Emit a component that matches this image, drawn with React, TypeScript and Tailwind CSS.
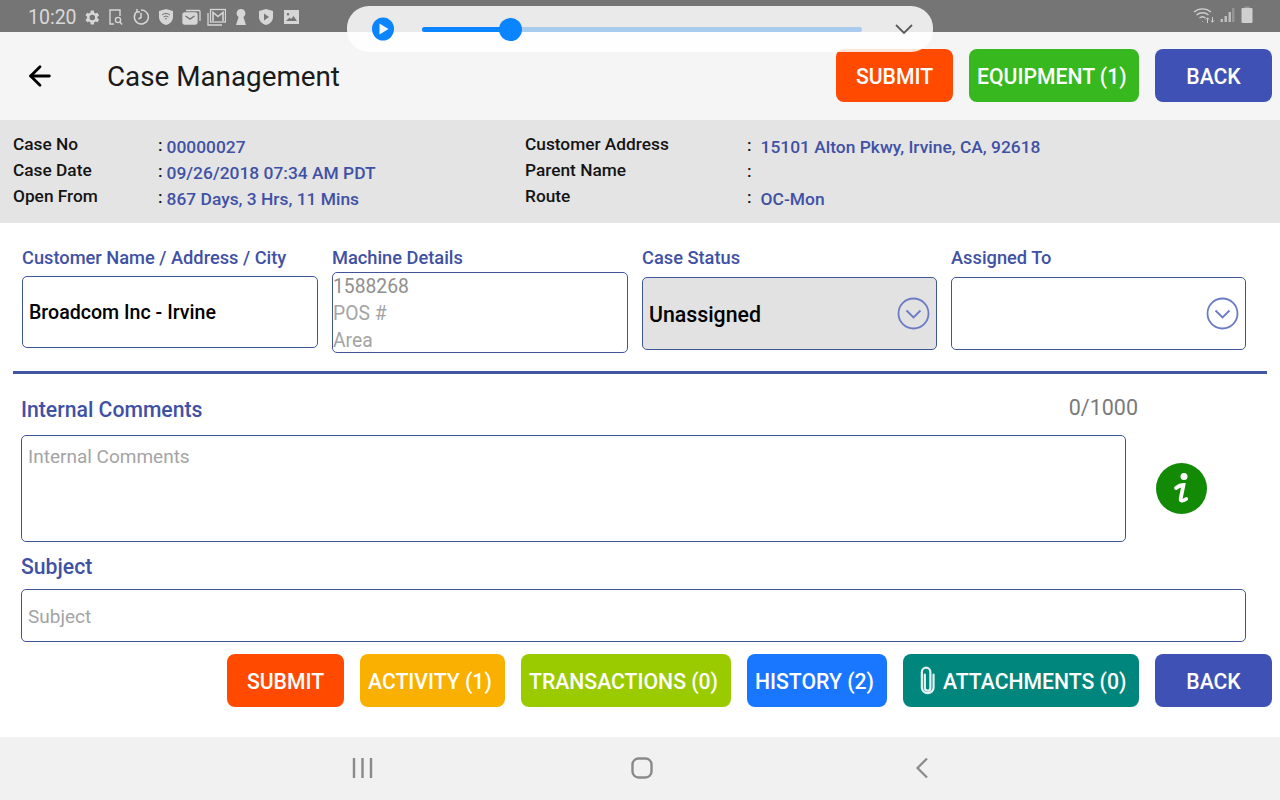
import React from "react";
import { ArrowLeft } from "lucide-react";

const labelCls = "text-[18.25px] font-medium leading-5 text-[#3f51a5]";
const btnCls = "flex h-[53px] items-center justify-center rounded-lg pt-[2px] text-[21.2px] font-medium text-white";
const fieldBorder = "border border-[#3f5799]";

function StatusIcons() {
  return (
    <div className="ml-[2px] mt-[2px] grid auto-cols-[25px] grid-flow-col items-center justify-items-center text-[#d6d6d6]">
      {/* gear */}
      <svg width="19" height="19" viewBox="0 0 24 24" fill="currentColor">
        <path d="M19.400 13a7.500 7.500 0 0 0 0-2l2.100-1.600-2-3.500-2.500 1a7.600 7.600 0 0 0-1.700-1L15 3.200h-4l-.4 2.700a7.600 7.600 0 0 0-1.700 1l-2.500-1-2 3.500L6.500 11a7.500 7.500 0 0 0 0 2l-2.100 1.600 2 3.500 2.500-1a7.600 7.600 0 0 0 1.700 1l.4 2.700h4l.4-2.700a7.600 7.600 0 0 0 1.700-1l2.500 1 2-3.500zM13 15.500a3.500 3.500 0 1 1 0-7 3.500 3.500 0 0 1 0 7z" />
      </svg>
      {/* doc search */}
      <svg width="16" height="18" viewBox="0 0 16 18" fill="none" stroke="currentColor" strokeWidth="1.400">
        <path d="M6 16H2V2h10v6" />
        <circle cx="10" cy="12" r="2.600" />
        <path d="M12 14l2 2.500" />
      </svg>
      {/* timer */}
      <svg width="18" height="18" viewBox="0 0 18 18" fill="none" stroke="currentColor" strokeWidth="1.500">
        <path d="M5 3.500A7 7 0 1 0 9 2M9 5v4.500l-2.500 1.500M5 1v3h3" />
      </svg>
      {/* shield wifi */}
      <svg width="18" height="18" viewBox="0 0 18 18" fill="currentColor">
        <path d="M2 3l7-2 7 2v6c0 4-3 7-7 8-4-1-7-4-7-8z" />
        <path d="M5 7a6 6 0 0 1 8 0M6.500 9a4 4 0 0 1 5 0M8 11a1.500 1.500 0 0 1 2 0" stroke="#757575" strokeWidth="1" fill="none" />
      </svg>
      {/* mail stack */}
      <svg width="19" height="18" viewBox="0 0 19 18" fill="none" stroke="currentColor" strokeWidth="1.300">
        <rect x="1" y="5" width="14" height="11" rx="1.500" fill="currentColor" />
        <path d="M3.500 8l4.500 3 4.500-3" stroke="#757575" strokeWidth="1.500" />
        <path d="M4 2.500h13a1 1 0 0 1 1 1V13" />
      </svg>
      {/* gmail stack */}
      <svg width="19" height="18" viewBox="0 0 19 18" fill="none" stroke="currentColor" strokeWidth="1.300">
        <path d="M1 5v12h14" />
        <rect x="3.500" y="1.500" width="15" height="12.500" />
        <path d="M6 13V4.500l5 4 5-4V13" strokeWidth="1.600" />
      </svg>
      {/* keyhole */}
      <svg width="12" height="18" viewBox="0 0 12 18" fill="currentColor">
        <path d="M6 1a4.300 4.300 0 0 1 2.400 7.900L11 17H1l2.600-8.100A4.300 4.300 0 0 1 6 1z" />
      </svg>
      {/* shield play */}
      <svg width="16" height="18" viewBox="0 0 16 18" fill="currentColor">
        <path d="M1 3l7-2 7 2v6c0 4-3 7-7 8-4-1-7-4-7-8z" />
        <path d="M6 5.500l5 3.500-5 3.500z" fill="#757575" />
      </svg>
      {/* picture */}
      <svg width="17" height="16" viewBox="0 0 17 16" fill="currentColor">
        <path d="M1 1h15v14H1zM3 12h11l-3.500-5-2.500 3-1.500-1.500zM5 4a1.300 1.300 0 1 0 0 2.600A1.300 1.300 0 0 0 5 4z" fillRule="evenodd" />
      </svg>
    </div>
  );
}

function StatusBar() {
  return (
    <div className="flex h-8 items-center justify-between bg-[#757575] pl-[28px] pr-[27px]">
      <div className="flex items-center">
        <span className="pt-[4px] text-[19.500px] text-[#d9d9d9]">10:20</span>
        <StatusIcons />
      </div>
      <div className="mb-[2px] flex items-center text-[#cfcfcf]">
        <svg width="24" height="18" viewBox="0 0 24 18" fill="none" stroke="currentColor" strokeWidth="1.400">
          <path d="M1 6a13 13 0 0 1 17 0M3.500 9a9 9 0 0 1 12 0M6.500 12a4.500 4.500 0 0 1 6 0" />
          <path d="M9.500 15v.5M14.500 17v-5M12.800 13.500l1.700-1.700 1.700 1.700M19.500 11v5M17.800 14.500l1.700 1.700 1.700-1.700" strokeWidth="1" />
        </svg>
        <svg className="ml-[3px] text-[#bdbdbd]" width="15" height="16" viewBox="0 0 15 16" fill="currentColor">
          <rect x="0.500" y="12" width="2.500" height="3" />
          <rect x="4.500" y="9" width="2.500" height="6" />
          <rect x="8.500" y="5" width="2.500" height="10" />
          <rect x="12" y="1" width="2.500" height="14" opacity="0.450" />
        </svg>
        <svg className="ml-[6px]" width="12" height="18" viewBox="0 0 12 18" fill="currentColor">
          <rect x="3.500" y="0.500" width="5" height="2" opacity="0.400" />
          <rect x="0.500" y="2" width="11" height="15" rx="1" />
        </svg>
      </div>
    </div>
  );
}

function MediaPlayer() {
  return (
    <div className="absolute left-[347px] top-[6px] flex h-[46px] w-[586px] items-center rounded-[22px] bg-white/[.85] pl-[25px] pr-[19px]">
      <svg width="22" height="24" viewBox="0 0 22 24">
        <ellipse cx="11" cy="12" rx="11" ry="11.500" fill="#0a84ff" />
        <path d="M7.500 6.500l9 5.500-9 5.500z" fill="#f2f6fb" />
      </svg>
      <div className="relative ml-[28px] h-[5px] w-[440px] rounded-full bg-[#a9ccee]">
        <div className="h-full w-[89px] rounded-full bg-[#0a84ff]" />
        <div className="absolute left-[77px] top-[-9px] h-[23px] w-[23px] rounded-full bg-[#0a84ff]" />
      </div>
      <svg className="ml-auto" width="20" height="12" viewBox="0 0 20 12" fill="none" stroke="#5c5c5c" strokeWidth="1.800">
        <path d="M2 2l8 8 8-8" />
      </svg>
    </div>
  );
}

function Header() {
  return (
    <div className="flex h-[88px] items-center bg-[#f5f5f5] pr-2">
      <ArrowLeft className="ml-[24px] text-black" size={32} strokeWidth={2.100} />
      <span className="ml-[51px] pt-[2px] text-[27.800px] text-[#1a1a1a]">Case Management</span>
      <div className="ml-auto flex gap-4 pb-[1px]">
        <button className={`${btnCls} w-[117px] bg-[#ff4a00]`}>SUBMIT</button>
        <button className={`${btnCls} w-[170px] !justify-start pl-2 bg-[#36b81e]`}>EQUIPMENT (1)</button>
        <button className={`${btnCls} w-[117px] bg-[#3f51b5]`}>BACK</button>
      </div>
    </div>
  );
}

function InfoRow({ label, value, labelW }: { label: string; value: string; labelW: string }) {
  return (
    <div className="flex h-[26px] items-center">
      <span className={`${labelW} text-[17.300px] font-medium text-[#141414]`}>{label}</span>
      <span className="mt-[1px] text-[17.300px] font-medium text-[#141414]">:</span>
      <span className={`mt-[5px] text-[17.400px] font-medium text-[#3f51a5] ${labelW === "w-[222px]" ? "ml-[9px]" : "ml-[4px]"}`}>{value}</span>
    </div>
  );
}

function InfoPanel() {
  return (
    <div className="flex h-[103px] bg-[#e4e4e4] pl-[13px] pt-[12px]">
      <div className="w-[512px]">
        <InfoRow labelW="w-[145px]" label="Case No" value="00000027" />
        <InfoRow labelW="w-[145px]" label="Case Date" value="09/26/2018 07:34 AM PDT" />
        <InfoRow labelW="w-[145px]" label="Open From" value="867 Days, 3 Hrs, 11 Mins" />
      </div>
      <div>
        <InfoRow labelW="w-[222px]" label="Customer Address" value="15101 Alton Pkwy, Irvine, CA, 92618" />
        <InfoRow labelW="w-[222px]" label="Parent Name" value="" />
        <InfoRow labelW="w-[222px]" label="Route" value="OC-Mon" />
      </div>
    </div>
  );
}

function DropCircle() {
  return (
    <svg className="ml-auto mr-[6px]" width="33" height="33" viewBox="0 0 33 33" fill="none" stroke="#6c7cc4" strokeWidth="1.800">
      <circle cx="16.500" cy="16.500" r="15" />
      <path d="M9.500 13.500l7 7 7-7" />
    </svg>
  );
}

function TopFields() {
  return (
    <div className="mx-[13px] flex h-[151px] flex-col border-b-[3px] border-[#3f55a5]">
      <div className="ml-[9px] grid grid-cols-[296px_296px_295px_295px] gap-x-[14px] pt-[25px]">
        <div>
          <div className={labelCls}>Customer Name / Address / City</div>
          <div className={`mt-[8px] flex h-[72px] items-center rounded-[5px] ${fieldBorder} bg-white pl-[6px] pt-[2px] text-[19.600px] font-medium text-black`}>
            Broadcom Inc - Irvine
          </div>
        </div>
        <div>
          <div className={labelCls}>Machine Details</div>
          <div className={`mt-[4px] flex h-[81px] flex-col justify-center rounded-[5px] ${fieldBorder} bg-white pt-[2px] text-[19.300px] leading-[27px] text-[#a4a4a4]`}>
            <span className="text-[#8f8f8f]">1588268</span>
            <span>POS #</span>
            <span>Area</span>
          </div>
        </div>
        <div>
          <div className={labelCls}>Case Status</div>
          <div className={`mt-[9px] flex h-[73px] items-center rounded-[5px] ${fieldBorder} bg-[#e2e2e2] pl-[6px] text-[21.300px] font-medium text-black`}>
            <span className="pt-[2px]">Unassigned</span>
            <DropCircle />
          </div>
        </div>
        <div>
          <div className={labelCls}>Assigned To</div>
          <div className={`mt-[9px] flex h-[73px] items-center rounded-[5px] ${fieldBorder} bg-white`}>
            <DropCircle />
          </div>
        </div>
      </div>
    </div>
  );
}

function Comments() {
  return (
    <div className="pl-[21px]">
      <div className="flex h-[61px] w-[1117px] items-end justify-between pb-[13px]">
        <span className="text-[21.200px] font-medium leading-6 text-[#3f51a5]">Internal Comments</span>
        <span className="mb-[2px] text-[21.500px] leading-6 text-[#7a7a7a]">0/1000</span>
      </div>
      <div className="flex items-center">
        <div className={`h-[107px] w-[1105px] rounded-[5px] ${fieldBorder} pl-[6px] pt-[9px] text-[19px] leading-6 text-[#a4a4a4]`}>
          Internal Comments
        </div>
        <svg className="ml-[30px]" width="51" height="51" viewBox="0 0 51 51">
          <circle cx="25.500" cy="25.500" r="25.500" fill="#138a05" />
          <circle cx="28" cy="13.500" r="3.500" fill="#fff" />
          <path d="M20 25c2.500-2 5-3 7.500-3l-2.800 13.500c-.3 2.500 1.500 3 5.500.5" fill="none" stroke="#fff" strokeWidth="3.800" strokeLinecap="round" />
        </svg>
      </div>
      <div className="mt-[13px] text-[21.200px] font-medium leading-6 text-[#3f51a5]">Subject</div>
      <div className={`mt-[10px] flex h-[53px] w-[1225px] items-center rounded-[5px] ${fieldBorder} pl-[6px] pt-[4px] text-[19px] text-[#a4a4a4]`}>
        Subject
      </div>
    </div>
  );
}

function BottomButtons() {
  return (
    <div className="mt-3 flex justify-end gap-4 pr-2">
      <button className={`${btnCls} w-[117px] bg-[#ff4a00]`}>SUBMIT</button>
      <button className={`${btnCls} w-[145px] !justify-start pl-2 bg-[#f9b000]`}>ACTIVITY (1)</button>
      <button className={`${btnCls} w-[210px] !justify-start pl-2 bg-[#9acb00]`}>TRANSACTIONS (0)</button>
      <button className={`${btnCls} w-[140px] !justify-start pl-2 bg-[#1976ff]`}>HISTORY (2)</button>
      <button className={`${btnCls} w-[236px] !justify-start gap-[7px] pl-[16px] bg-[#00867d]`}>
        <svg className="-mt-[2px]" width="17" height="30" viewBox="0 0 16 28" fill="none" stroke="#e0f2f1" strokeWidth="2.100" strokeLinecap="round">
          <path d="M5.500 8v12.500a2.600 2.600 0 0 0 5.200 0V5.500a4 4 0 0 0-8 0V20a5.500 5.500 0 0 0 11 0V8" />
        </svg>
        ATTACHMENTS (0)
      </button>
      <button className={`${btnCls} w-[117px] bg-[#3f51b5]`}>BACK</button>
    </div>
  );
}

function NavBar() {
  return (
    <div className="mt-auto flex h-[63px] items-center bg-[#f1f1f1] pb-[2px]">
      <svg className="ml-[352px]" width="21" height="20" viewBox="0 0 21 20" stroke="#8a8a8a" strokeWidth="2.400">
        <path d="M2 0v20M10.500 0v20M19 0v20" />
      </svg>
      <svg className="ml-[258px]" width="22" height="22" viewBox="0 0 22 22" fill="none" stroke="#8a8a8a" strokeWidth="2.400">
        <rect x="1.500" y="1.500" width="19" height="19" rx="6" />
      </svg>
      <svg className="ml-[262px]" width="14" height="22" viewBox="0 0 14 22" fill="none" stroke="#8a8a8a" strokeWidth="2.200">
        <path d="M12 1.500L2.500 11l9.500 9.500" />
      </svg>
    </div>
  );
}

export default function App() {
  return (
    <div
      className="relative flex h-[800px] w-[1280px] flex-col overflow-hidden bg-white"
      style={{ fontFamily: "Roboto, sans-serif" }}
    >
      <StatusBar />
      <Header />
      <InfoPanel />
      <TopFields />
      <Comments />
      <BottomButtons />
      <NavBar />
      <MediaPlayer />
    </div>
  );
}
